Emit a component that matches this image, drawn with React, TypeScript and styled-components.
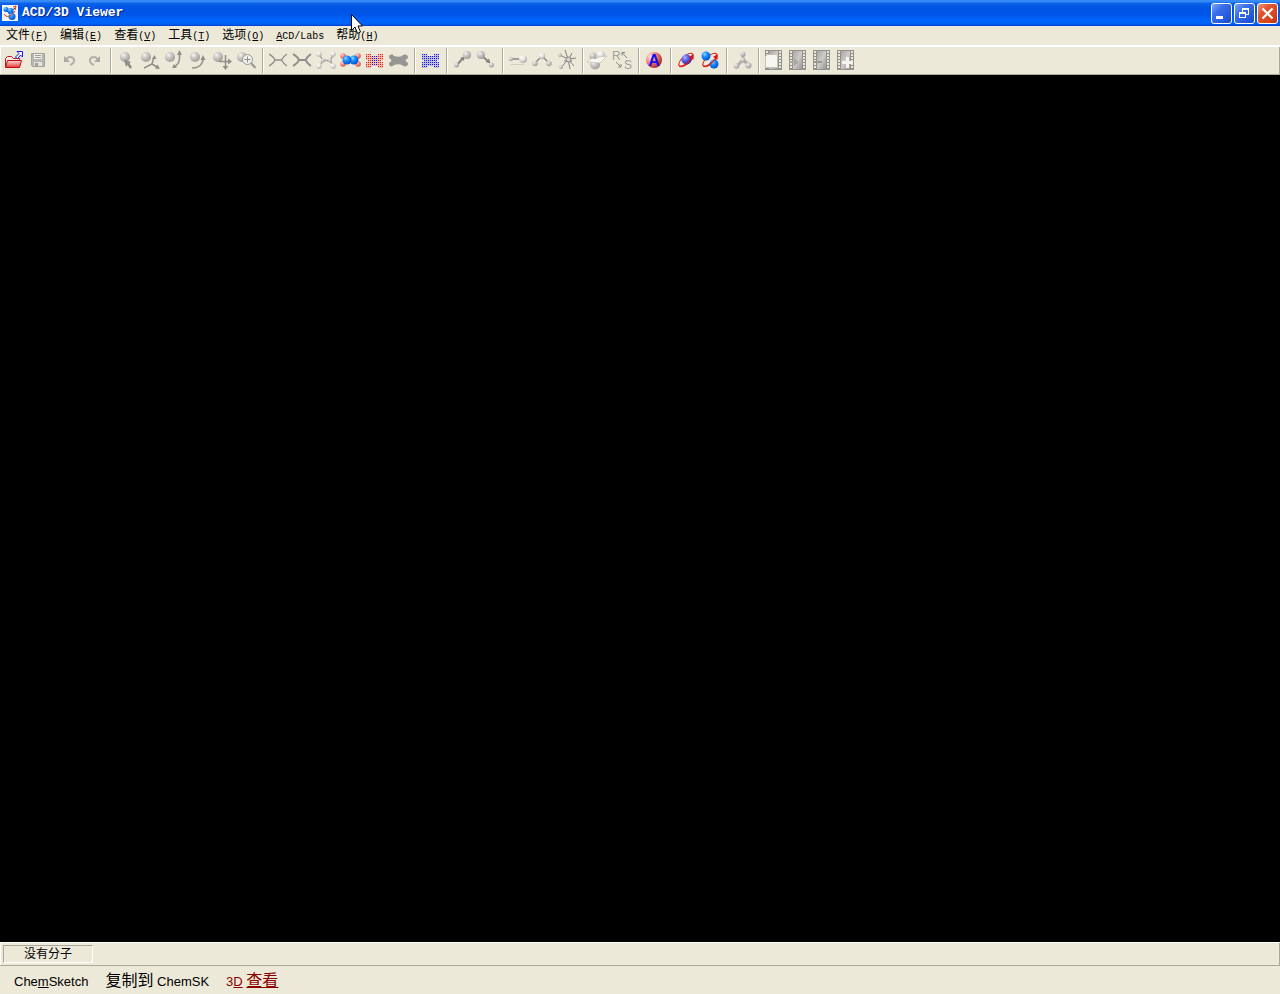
import React from "react";
import styled, { createGlobalStyle } from "styled-components";

const GlobalStyle = createGlobalStyle`
  * { box-sizing: border-box; }
  body { margin: 0; background: #ece9d8; }
  button { margin: 0; padding: 0; border: 0; background: none; color: inherit; }
`;

const uiFont = `"Liberation Sans", "Noto Sans CJK SC", sans-serif`;

const Window = styled.div`
  display: flex;
  flex-direction: column;
  min-height: 100vh;
  background: #ece9d8;
  color: #000;
  font-family: ${uiFont};
`;

const TitleBar = styled.header`
  display: flex;
  align-items: center;
  gap: 4px;
  height: 26px;
  padding: 0 2px;
  background: linear-gradient(#2f86f5 0, #3d8ff8 4%, #0a62e8 14%, #0054e3 30%, #0055e8 55%, #0065fc 80%, #0062f4 92%, #003dd0 100%);
`;

const Title = styled.h1`
  flex: 1;
  margin: 0;
  color: #fff;
  font: bold 13px/26px "Liberation Mono", monospace;
  text-shadow: 1px 1px 0 #0a2a80;
`;

const WindowButtons = styled.div`
  display: flex;
  gap: 2px;
`;

const WindowButton = styled.button<{ $close?: boolean }>`
  width: 21px;
  height: 21px;
  border: 1px solid #fff;
  border-radius: 3px;
  background: ${(p) =>
    p.$close
      ? "linear-gradient(135deg, #f0957a 0, #e0532c 35%, #d4431c 75%, #b8300c 100%)"
      : "linear-gradient(135deg, #7da6f6 0, #3a6eea 35%, #2358dc 75%, #1a48c0 100%)"};
  svg { display: block; }
`;

const MenuBar = styled.nav`
  position: relative;
  display: flex;
  align-items: flex-start;
  height: 19px;
`;

const MenuItem = styled.button`
  display: block;
  padding: 0 6px;
  font: 12px/16px "Noto Sans CJK SC", sans-serif;
  white-space: nowrap;
`;

const Latin = styled.span`
  font-family: "Liberation Mono", monospace;
  font-size: 10px;
`;

const Pointer = styled.svg`
  position: absolute;
  left: 351px;
  top: -12px;
  pointer-events: none;
`;

const ToolBar = styled.div`
  display: flex;
  height: 30px;
  padding: 1px 2px;
  border: solid #fff;
  border-width: 2px 0 0 0;
  border-bottom: 1px solid #aca899;
  box-shadow: inset 1px 0 #fff, inset -1px 0 #aca899;
`;

const ToolButton = styled.button`
  width: 24px;
  height: 24px;
  flex: none;
  svg { display: block; }
`;

const Separator = styled.span`
  width: 8px;
  flex: none;
  background: linear-gradient(90deg, transparent 4px, #aca899 4px, #aca899 5px, #fff 5px, #fff 6px, transparent 6px);
`;

const Viewport = styled.main`
  flex: 1;
  background: #000;
`;

const StatusBar = styled.div`
  display: flex;
  height: 24px;
  padding: 2px 3px;
  border-top: 1px solid #fff;
  border-bottom: 1px solid #aca899;
  box-shadow: inset 1px 0 #fff, inset -1px 0 #aca899;
`;

const StatusCell = styled.output`
  width: 90px;
  height: 18px;
  border: 1px solid;
  border-color: #aca899 #fff #fff #aca899;
  font: 12px/14px "Noto Sans CJK SC", sans-serif;
  text-align: center;
`;

const Modes = styled.footer`
  display: flex;
  align-items: baseline;
  height: 28px;
  padding: 3px 14px 0;
  gap: 17px;
`;

const ModeButton = styled.button<{ $active?: boolean }>`
  color: ${(p) => (p.$active ? "#8b0000" : "#000")};
  font: 13px/24px ${uiFont};
  white-space: nowrap;
`;

const Han = styled.span`
  font-size: 16px;
`;

const HanUnderlined = styled(Han)`
  text-decoration: underline;
  text-decoration-thickness: 1px;
`;

const G = "#a09f9a";

const Ball = ({ x, y, r, c = "gray" }: { x: number; y: number; r: number; c?: string }) => (
  <circle cx={x} cy={y} r={r} fill={`url(#ball-${c})`} />
);

const Line = ({ d, c = G, w = 1 }: { d: string; c?: string; w?: number }) => (
  <path d={d} fill="none" stroke={c} strokeWidth={w} />
);

const HiddenSvg = styled.svg`
  position: absolute;
`;

const Defs = () => (
  <HiddenSvg width="0" height="0" aria-hidden="true">
    <defs>
      <radialGradient id="ball-gray" cx=".35" cy=".3" r=".75">
        <stop offset="0" stopColor="#f4f4f2" />
        <stop offset=".45" stopColor="#c6c5c2" />
        <stop offset="1" stopColor="#9b9a97" />
      </radialGradient>
      <radialGradient id="ball-white" cx=".35" cy=".3" r=".8">
        <stop offset="0" stopColor="#fff" />
        <stop offset=".5" stopColor="#e0dfdc" />
        <stop offset="1" stopColor="#9f9e9a" />
      </radialGradient>
      <radialGradient id="ball-blue" cx=".35" cy=".3" r=".75">
        <stop offset="0" stopColor="#8fd8ff" />
        <stop offset=".4" stopColor="#1a8cff" />
        <stop offset="1" stopColor="#0050c8" />
      </radialGradient>
      <radialGradient id="ball-violet" cx=".35" cy=".3" r=".75">
        <stop offset="0" stopColor="#b4b4ff" />
        <stop offset=".45" stopColor="#5560f0" />
        <stop offset="1" stopColor="#1c24b4" />
      </radialGradient>
      <radialGradient id="ball-pink" cx=".35" cy=".3" r=".8">
        <stop offset="0" stopColor="#ffd0c8" />
        <stop offset=".5" stopColor="#f08078" />
        <stop offset="1" stopColor="#c84040" />
      </radialGradient>
      <radialGradient id="ball-red" cx=".3" cy=".3" r=".8">
        <stop offset="0" stopColor="#ffe8e4" />
        <stop offset=".5" stopColor="#f47c74" />
        <stop offset="1" stopColor="#a81818" />
      </radialGradient>
      <linearGradient id="film" x1="0" y1="0" x2="1" y2="1">
        <stop offset="0" stopColor="#a8a7a4" />
        <stop offset=".5" stopColor="#cccbc8" />
        <stop offset="1" stopColor="#969592" />
      </linearGradient>
      <linearGradient id="folder" x1="0" y1="0" x2="0" y2="1">
        <stop offset="0" stopColor="#ffdcd8" />
        <stop offset="1" stopColor="#e03838" />
      </linearGradient>
    </defs>
  </HiddenSvg>
);

const surfaceRows: { y: number; spans: [number, number][] }[] = [
  { y: 6, spans: [[4, 8], [16, 20]] },
  { y: 8, spans: [[4, 20]] },
  { y: 10, spans: [[4, 20]] },
  { y: 12, spans: [[6, 18]] },
  { y: 14, spans: [[4, 20]] },
  { y: 16, spans: [[4, 20]] },
  { y: 18, spans: [[4, 8], [16, 20]] },
];

const Dots = ({ y, from, to, edge }: { y: number; from: number; to: number; edge: string }) => (
  <>
    {Array.from({ length: (to - from) / 2 + 1 }, (_, i) => from + i * 2).map((x) => (
      <rect key={x} x={x} y={y} width="1" height="1" fill={x < 9 || x > 15 ? edge : "#1414f0"} />
    ))}
  </>
);

const DotSurface = ({ edge }: { edge: string }) => (
  <g shapeRendering="crispEdges">
    {surfaceRows.map(({ y, spans }) =>
      spans.map(([from, to]) => (
        <g key={`${y}-${from}`}>
          <rect x={from} y={y} width={to - from + 1} height="2" fill={edge} opacity=".2" />
          <Dots y={y} from={from} to={to} edge={edge} />
        </g>
      ))
    )}
  </g>
);

const Film = ({ children }: { children?: React.ReactNode }) => (
  <g shapeRendering="crispEdges">
    <rect x="3" y="2" width="17" height="20" fill="#92918e" />
    <rect x="7" y="3" width="9" height="18" fill="url(#film)" />
    {[3, 6, 9, 12, 15, 18].map((y) => (
      <g key={y} fill="#ece9d8">
        <rect x="4" y={y} width="2" height="2" />
        <rect x="17" y={y} width="2" height="2" />
      </g>
    ))}
    {children}
  </g>
);

const Wire = ({ w }: { w: number }) => (
  <Line c="#8f8e8b" d="M3 6C6 8 8 9 9 12H15.500C17 9 18 8 21 6M3 18C6 16 8 15 9 12M15.500 12C17 15 18 16 21 18" w={w} />
);

type Tool = [string, React.ReactNode];

const groups: Tool[][] = [
  [
    ["打开", <>
      <path d="M3.500 18.500V10.500L5.500 8.500H9.500L11.500 10.500H17.500V18.500Z" fill="#ffe4e0" stroke="#c81c1c" />
      <path d="M3.500 19.500L5.500 12.500H19.500L17.500 19.500Z" fill="url(#folder)" stroke="#c00c0c" />
      <path d="M15 3.500H20.500V9L18.500 7L15.500 11L13.500 9L17 5.500Z" fill="#fff" stroke="#1818e0" />
    </>],
    ["保存", <>
      <path d="M5.500 5.500H18.500V18.500H6.500L5.500 17.500Z" fill="#b7b6b3" stroke="#a3a29e" />
      <path d="M8 6H16V11H8Z" fill="#eeede8" />
      <Line d="M9 7.500H15M9 9.500H15" />
      <path d="M8 14H16V18H8Z" fill="#e3e2dd" />
      <path d="M9 15H12V18H9Z" fill="#a09f9a" />
    </>],
  ],
  [
    ["撤消", <>
      <Line d="M8 11.500C10 8 15 8 16 11.500C16.500 14 15 16 12 17" w={2} c="#b1b0ad" />
      <path d="M6 8V14H12Z" fill="#aaa9a6" />
    </>],
    ["重做", <>
      <Line d="M16 11.500C14 8 9 8 8 11.500C7.500 14 9 16 12 17" w={2} c="#b1b0ad" />
      <path d="M18 8V14H12Z" fill="#aaa9a6" />
    </>],
  ],
  [
    ["选择", <>
      <Ball x={11} y={9} r={5} />
      <path d="M10 11.500L17 14L15.500 15.500L18 19L16 21L13.500 17L12 19Z" fill="#8f8e8b" />
    </>],
    ["三维旋转", <>
      <Ball x={8} y={9} r={5} />
      <Line d="M6 20L14 16L16 9M14 16L20 19.500" c="#8f8e8b" w={1.5} />
      <path d="M16.500 7L18.500 11H14ZM22 21L17 20.500L19.500 16.500Z" fill="#8f8e8b" />
    </>],
    ["垂直旋转", <>
      <Ball x={8} y={9} r={5} />
      <Line d="M17.500 6V11C17 15 16 17 12 19" c="#8f8e8b" w={1.5} />
      <path d="M17.500 2L20 7H15ZM10 20L12 16L15 20Z" fill="#8f8e8b" />
    </>],
    ["平面旋转", <>
      <Ball x={9} y={9} r={5} />
      <Line d="M6 20C12 20 17 17 17 10" c="#8f8e8b" w={1.5} />
      <path d="M17 7L19.500 12H14.500Z" fill="#8f8e8b" />
    </>],
    ["移动", <>
      <Ball x={8} y={9} r={5} />
      <Line d="M15.500 7V20M9 13.500H21" c="#8f8e8b" w={1.5} />
      <path d="M22 13.500L18 10.500V16.500ZM15.500 22L12.500 18H18.500Z" fill="#8f8e8b" />
    </>],
    ["缩放", <>
      <Ball x={8} y={9} r={5} />
      <Line d="M17 15L21.500 20" w={2.5} />
      <circle cx="13.500" cy="11.500" r="5" fill="#f0efea" stroke="#9b9a97" />
      <Line d="M10.500 11.500H16.500M13.500 8.500V14.500" c="#8f8e8b" />
    </>],
  ],
  [
    ["线框", <Wire w={1.3} />],
    ["棍状", <Wire w={2} />],
    ["球棍", <>
      <Line d="M5 6L9 12.500H16L20 6M5 19L9 12.500M16 12.500L20 19" w={1.3} />
      <Ball x={5} y={6} r={2.700} c="white" />
      <Ball x={19} y={6} r={2.700} c="white" />
      <Ball x={5} y={18} r={2.700} c="white" />
      <Ball x={19} y={18} r={2.700} c="white" />
      <Ball x={9} y={12.500} r={2} />
      <Ball x={16} y={12.500} r={2} />
    </>],
    ["空间填充", <>
      <Ball x={5} y={8} r={2.800} c="pink" />
      <Ball x={20} y={8} r={2.800} c="pink" />
      <Ball x={5} y={16} r={2.800} c="pink" />
      <Ball x={20} y={16} r={2.800} c="pink" />
      <Ball x={16} y={12} r={4.500} c="blue" />
      <Ball x={9} y={12} r={4.500} c="blue" />
    </>],
    ["点面", <DotSurface edge="#f01818" />],
    ["圆盘", <path d="M3 9C3 6 7 6 8 8Q12.500 9.500 16 8C17 5.500 22 6 22 9C22 11 20 11 19.500 12.500C20 14 22 14 22 16C22 19 17 19 16 17Q12.500 15.500 8 17C7 19 3 19 3 16C3 14 5 14 5.500 12.500C5 11 3 11 3 9Z" fill="#979693" />],
  ],
  [["显示点", <DotSurface edge="#1414f0" />]],
  [
    ["添加氢", <>
      <Line d="M7 17L13 10" w={2} c="#858481" />
      <path d="M14.500 8.500L14 13L10 10Z" fill="#858481" />
      <Ball x={17} y={7} r={4} />
      <Ball x={6.500} y={17} r={2.500} />
    </>],
    ["移除氢", <>
      <Line d="M8 8L15 14" w={2} c="#858481" />
      <path d="M16.500 15.500L11.500 14L15 10.500Z" fill="#858481" />
      <Ball x={7} y={7} r={4} />
      <Ball x={17.500} y={17} r={2.500} />
    </>],
  ],
  [
    ["键长", <>
      <Line d="M5 16.500H18" c="#d0cec3" />
      <Line d="M5 11H16" c="#858481" w={1.5} />
      <Ball x={5} y={11} r={2.200} />
      <Ball x={17} y={11} r={4} c="white" />
    </>],
    ["键角", <>
      <Line d="M5 15L12 8L19 15" c="#858481" w={1.3} />
      <Ball x={12} y={8} r={3.200} c="white" />
      <Ball x={5} y={15.500} r={2.700} />
      <Ball x={19} y={15.500} r={2.700} />
    </>],
    ["二面角", <>
      <Line d="M6 7L14 11L22 10M14 11L11 2M14 11L7 20M14 11L16 21M14 11L20 18M10 13H18M18 5L14 13" c="#858481" />
      <Ball x={6} y={7} r={2} />
      <Ball x={7} y={19} r={2} />
      <circle cx="14.500" cy="11.500" r="2.500" fill="#d9d7cd" stroke="#858481" />
    </>],
  ],
  [
    ["优化", <>
      <Ball x={9} y={16.500} r={5} />
      <Ball x={7} y={8} r={3.500} />
      <Ball x={15} y={7} r={4} c="white" />
      <path d="M1 14L6 10Q10 12 13 9L21 8L14 15Z" fill="#f8f7f4" stroke="#b5b3aa" strokeWidth=".6" />
    </>],
    ["手性反转", <>
      <text x="2" y="12" fontSize="12" fontFamily="Liberation Sans, sans-serif" fill="#a3a29e">R</text>
      <text x="14" y="21" fontSize="12" fontFamily="Liberation Sans, sans-serif" fill="#a3a29e">S</text>
      <Line d="M12 4.500L17 10M12 7.500V4.500H15M6 14L11 19M8 19H11V16" c="#858481" />
    </>],
  ],
  [["字母标签", <>
    <Ball x={12} y={12} r={8} c="red" />
    <text x="12" y="18" textAnchor="middle" fontSize="16" fontWeight="bold" fontFamily="Liberation Sans, sans-serif" fill="#1010f0">A</text>
  </>]],
  [
    ["自动旋转", <>
      <ellipse cx="12" cy="12" rx="9" ry="4" transform="rotate(-42 12 12)" fill="none" stroke="#e01414" />
      <Ball x={12.5} y={11.5} r={5} c="violet" />
      <path d="M5.300 18C8 19 14 16 18 10" fill="none" stroke="#e01414" strokeWidth="1.200" />
      <path d="M19.500 6V12L15 9Z" fill="#e01414" />
    </>],
    ["旋转并改变样式", <>
      <ellipse cx="12" cy="12" rx="9" ry="4" transform="rotate(-42 12 12)" fill="none" stroke="#e01414" />
      <Ball x={8} y={8} r={4.500} c="blue" />
      <Ball x={16} y={16} r={4.500} c="blue" />
      <path d="M5.300 18C8 19 14 16 18 10" fill="none" stroke="#e01414" strokeWidth="1.200" />
      <path d="M19.500 6V12L15 9Z" fill="#e01414" />
    </>],
  ],
  [["构象", <>
    <Line d="M13 6V12L7 18M13 12L19 17" w={3} c="#b0afab" />
    <Ball x={13} y={6} r={2.500} />
    <Ball x={6.500} y={18} r={2.700} />
    <Ball x={18.500} y={17.500} r={3} />
    <Ball x={13} y={12} r={2.500} />
  </>]],
  [
    ["新建影片", <Film><path d="M3 9L6 6H15V19H3Z" fill="#f7f6f2" stroke="#c3c1b8" strokeWidth="1" /></Film>],
    ["添加帧", <Film><path d="M3 13H8V10L12 14L8 18V15H3Z" fill="#a9a8a4" /></Film>],
    ["删除帧", <Film><path d="M3 13H12V15H3Z" fill="#989793" /></Film>],
    ["插入帧", <Film><path d="M12 9H15V13H19V16H15V20H12V16H8V13H12Z" fill="#f5f4ef" /></Film>],
  ],
];

const menus: [string, string][] = [
  ["文件", "F"],
  ["编辑", "E"],
  ["查看", "V"],
  ["工具", "T"],
  ["选项", "O"],
];

const Menu = ({ name, hotkey }: { name: string; hotkey: string }) => (
  <MenuItem type="button">
    {name}
    <Latin>(<u>{hotkey}</u>)</Latin>
  </MenuItem>
);

export default function App() {
  return (
    <Window>
      <GlobalStyle />
      <Defs />
      <TitleBar>
        <svg width="16" height="16" viewBox="0 0 16 16" aria-hidden="true">
          <rect width="16" height="16" fill="#f4f4f4" />
          <path d="M2 3L7 8L13 3M7 8L9 14" stroke="#333" fill="none" />
          <Ball x={4} y={4.500} r={2.500} c="blue" />
          <Ball x={8.500} y={6} r={3} c="blue" />
          <Ball x={10} y={11.500} r={3.500} c="blue" />
          <path d="M2 9C4 13 9 12 13 6M11 2L14 1L13 5" stroke="#e03020" fill="none" />
        </svg>
        <Title>ACD/3D Viewer</Title>
        <WindowButtons>
          <WindowButton type="button" aria-label="最小化">
            <svg width="19" height="19"><path d="M4 12H11V15H4Z" fill="#fff" /></svg>
          </WindowButton>
          <WindowButton type="button" aria-label="还原">
            <svg width="19" height="19" fill="none" stroke="#fff" shapeRendering="crispEdges">
              <path d="M7 5.500H14M7.500 5V8M13.500 5V11M11 10.500H14M4 8.500H11M4.500 8V14M10.500 8V14M4 13.500H11" />
              <path d="M7 4.500H14M4 9.500H11" />
            </svg>
          </WindowButton>
          <WindowButton type="button" aria-label="关闭" $close>
            <svg width="19" height="19"><path d="M4.500 4.500L14.500 14.500M14.500 4.500L4.500 14.500" stroke="#fff" strokeWidth="2.200" /></svg>
          </WindowButton>
        </WindowButtons>
      </TitleBar>
      <MenuBar>
        {menus.map(([name, key]) => <Menu key={key} name={name} hotkey={key} />)}
        <MenuItem type="button"><Latin><u>A</u>CD/Labs</Latin></MenuItem>
        <Menu name="帮助" hotkey="H" />
        <Pointer width="13" height="21" viewBox="0 0 13 21" aria-hidden="true">
          <path d="M.5 .5V16.500L4 13L6.500 19.500L9.500 18L7 12H11.500Z" fill="#fff" stroke="#000" />
        </Pointer>
      </MenuBar>
      <ToolBar role="toolbar">
        {groups.map((tools, i) => (
          <React.Fragment key={i}>
            {i > 0 && <Separator />}
            {tools.map(([label, icon]) => (
              <ToolButton type="button" key={label} aria-label={label}>
                <svg width="24" height="24" viewBox="0 0 24 24">{icon}</svg>
              </ToolButton>
            ))}
          </React.Fragment>
        ))}
      </ToolBar>
      <Viewport />
      <StatusBar><StatusCell>没有分子</StatusCell></StatusBar>
      <Modes>
        <ModeButton type="button">Che<u>m</u>Sketch</ModeButton>
        <ModeButton type="button"><Han>复制到</Han> ChemSK</ModeButton>
        <ModeButton type="button" $active>3<u>D</u> <HanUnderlined>查看</HanUnderlined></ModeButton>
      </Modes>
    </Window>
  );
}
